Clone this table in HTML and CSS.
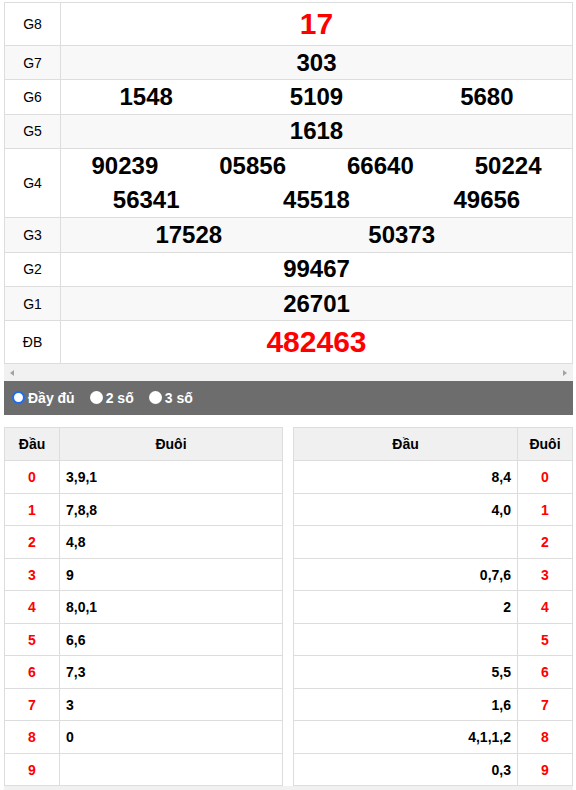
FILE: index.html
```html
<!DOCTYPE html>
<html lang="vi">
<head>
<meta charset="utf-8">
<title>Kết quả xổ số</title>
<link rel="stylesheet" href="styles.css">
</head>
<body>
<div class="page">
  <div class="kq">
    <div class="row r-big"><div class="lbl">G8</div><div class="nums n1 red"><span>17</span></div></div>
    <div class="row"><div class="lbl">G7</div><div class="nums n1"><span>303</span></div></div>
    <div class="row"><div class="lbl">G6</div><div class="nums n3"><span>1548</span><span>5109</span><span>5680</span></div></div>
    <div class="row"><div class="lbl">G5</div><div class="nums n1"><span>1618</span></div></div>
    <div class="row r-dbl"><div class="lbl">G4</div>
      <div class="stack">
        <div class="nums n4"><span>90239</span><span>05856</span><span>66640</span><span>50224</span></div>
        <div class="nums n3"><span>56341</span><span>45518</span><span>49656</span></div>
      </div>
    </div>
    <div class="row"><div class="lbl">G3</div><div class="nums n2"><span>17528</span><span>50373</span></div></div>
    <div class="row"><div class="lbl">G2</div><div class="nums n1"><span>99467</span></div></div>
    <div class="row"><div class="lbl">G1</div><div class="nums n1"><span>26701</span></div></div>
    <div class="row r-big"><div class="lbl">ĐB</div><div class="nums n1 red"><span>482463</span></div></div>
  </div>
  <div class="hscroll"><span class="arr arr-l"></span><span class="arr arr-r"></span></div>
  <div class="opts">
    <label class="opt"><span class="radio checked"></span>Đầy đủ</label>
    <label class="opt"><span class="radio"></span>2 số</label>
    <label class="opt"><span class="radio"></span>3 số</label>
  </div>
  <div class="loto">
    <div class="lt lt-left">
      <div class="c h">Đầu</div><div class="c h">Đuôi</div>
      <div class="c d">0</div><div class="c v">3,9,1</div>
      <div class="c d">1</div><div class="c v">7,8,8</div>
      <div class="c d">2</div><div class="c v">4,8</div>
      <div class="c d">3</div><div class="c v">9</div>
      <div class="c d">4</div><div class="c v">8,0,1</div>
      <div class="c d">5</div><div class="c v">6,6</div>
      <div class="c d">6</div><div class="c v">7,3</div>
      <div class="c d">7</div><div class="c v">3</div>
      <div class="c d">8</div><div class="c v">0</div>
      <div class="c d">9</div><div class="c v"></div>
    </div>
    <div class="lt lt-right">
      <div class="c h">Đầu</div><div class="c h">Đuôi</div>
      <div class="c v vr">8,4</div><div class="c d">0</div>
      <div class="c v vr">4,0</div><div class="c d">1</div>
      <div class="c v vr"></div><div class="c d">2</div>
      <div class="c v vr">0,7,6</div><div class="c d">3</div>
      <div class="c v vr">2</div><div class="c d">4</div>
      <div class="c v vr"></div><div class="c d">5</div>
      <div class="c v vr">5,5</div><div class="c d">6</div>
      <div class="c v vr">1,6</div><div class="c d">7</div>
      <div class="c v vr">4,1,1,2</div><div class="c d">8</div>
      <div class="c v vr">0,3</div><div class="c d">9</div>
    </div>
  </div>
  <div class="hscroll hs-bottom"></div>
</div>
</body>
</html>
```

FILE: styles.css
```css
* { box-sizing: border-box; }

body {
  margin: 0;
  background: #fff;
  color: #000;
  font-family: "Liberation Sans", Arial, sans-serif;
}

.page {
  width: 569px;
  margin: 2px 0 0 4px;
}

/* results table */
.kq {
  border: 1px solid #ddd;
  border-bottom: 0;
}

.row {
  display: grid;
  grid-template-columns: 56px 1fr;
  height: 34.3px;
  border-bottom: 1px solid #ddd;
}

.row:nth-child(even) { background: #f8f8f8; }

.r-big { height: 43px; }
.r-dbl { height: 69.6px; }

.lbl {
  display: flex;
  align-items: center;
  justify-content: center;
  border-right: 1px solid #ddd;
  font-size: 14px;
}

.stack {
  display: grid;
  grid-template-rows: 1fr 1fr;
}

.nums {
  display: grid;
  align-items: center;
  text-align: center;
  font-size: 24px;
  font-weight: bold;
}

.n1 { grid-template-columns: 1fr; }
.n2 { grid-template-columns: 50% 33.333%; }
.n3 { grid-template-columns: repeat(3, 1fr); }
.n4 { grid-template-columns: repeat(4, 1fr); }

.red {
  color: #f00;
  font-size: 30px;
}

/* fake horizontal scrollbar */
.hscroll {
  height: 17px;
  background: #f1f1f1;
  display: flex;
  align-items: center;
  justify-content: space-between;
  padding: 0 6px;
}

.arr {
  width: 0;
  height: 0;
  border-top: 3.5px solid transparent;
  border-bottom: 3.5px solid transparent;
}
.arr-l { border-right: 4px solid #a3a3a3; }
.arr-r { border-left: 4px solid #a3a3a3; }

/* options bar */
.opts {
  height: 34px;
  background: #6d6d6d;
  display: flex;
  align-items: center;
  gap: 15px;
  padding-left: 8px;
}

.opt {
  display: flex;
  align-items: center;
  gap: 3px;
  color: #fff;
  font-size: 14px;
  font-weight: bold;
}

.radio {
  width: 13px;
  height: 13px;
  border-radius: 50%;
  background: #fff;
  position: relative;
  top: -1px;
}

.radio.checked {
  border: 2px solid #1a6ef5;
}

/* loto tables */
.loto {
  display: flex;
  gap: 10px;
  margin-top: 12px;
}

.lt {
  display: grid;
  grid-template-rows: 33px repeat(10, 32.5px);
  border-top: 1px solid #ddd;
  border-left: 1px solid #ddd;
}

.lt-left {
  width: 279px;
  grid-template-columns: 55px 223px;
}

.lt-right {
  width: 280px;
  grid-template-columns: 224px 55px;
}

.c {
  display: flex;
  align-items: center;
  border-right: 1px solid #ddd;
  border-bottom: 1px solid #ddd;
  font-size: 14px;
  font-weight: bold;
}

.h {
  justify-content: center;
  background: #f0f0f0;
}

.d {
  justify-content: center;
  color: #f00;
}

.v { padding-left: 6px; }
.vr {
  justify-content: flex-end;
  padding: 0 6px 0 0;
}

.hs-bottom { margin-top: 0; }
```
